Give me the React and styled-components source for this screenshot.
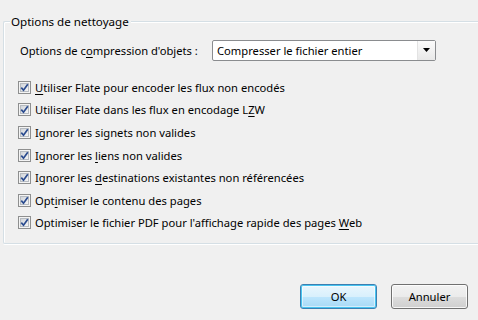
import React from "react";
import styled, { createGlobalStyle } from "styled-components";

const Global = createGlobalStyle`
  html, body { margin: 0; padding: 0; background: #f0f0f0; }
  body { width: 478px; height: 320px; overflow: hidden;
    font-family: "Segoe UI", "Noto Sans", "Open Sans", sans-serif; font-size: 11.2px; color: #000; }
`;

const Page = styled.div`
  width: 478px;
  height: 320px;
  display: flex;
  flex-direction: column;
  padding: 13px 0 0 3px;
  box-sizing: border-box;
`;

const Group = styled.fieldset`
  margin: 0;
  padding: 0 0 12px 14px;
  border: 1px solid #d5dfe5;
  border-right: none;
  border-radius: 2px 0 0 2px;
  box-shadow: inset 1px 1px 0 #fff, 0 1px 0 #fff;
  min-width: 0;
  height: 231px;
  box-sizing: border-box;
  display: flex;
  flex-direction: column;
`;

const Legend = styled.legend`
  margin-left: -8px;
  padding: 0 2px 0 1px;
  background: #f0f0f0;
  line-height: 17px;
  font-size: 11.6px;
`;

const ComboRow = styled.div`
  display: flex;
  align-items: center;
  gap: 14px;
  margin-top: 10px;
  height: 20px;
  margin-bottom: 16px;
  padding-left: 2px;
`;

const ComboLabel = styled.span`
  width: 178px;
  white-space: nowrap;
`;

const Combo = styled.div`
  width: 224px;
  height: 21px;
  box-sizing: border-box;
  border: 1px solid #8a8c8f;
  border-radius: 2px;
  background: #fff;
  display: flex;
  align-items: stretch;
`;

const ComboText = styled.div`
  flex: 1;
  padding-left: 4px;
  line-height: 19px;
  white-space: nowrap;
`;

const ComboButton = styled.div`
  width: 17px;
  display: flex;
  align-items: center;
  justify-content: center;
  background: linear-gradient(#fbfbfb, #e8e8e8);
  border-left: 1px solid #e3e3e3;
`;

const Row = styled.label`
  display: flex;
  align-items: center;
  gap: 4px;
  height: 22.6px;
  white-space: nowrap;
`;

const U = styled.span`
  text-decoration: underline;
  text-underline-offset: 2px;
`;

const Footer = styled.div`
  display: flex;
  justify-content: flex-end;
  gap: 14px;
  padding: 40px 10px 0 0;
`;

const Button = styled.button`
  width: 77px;
  height: 25px;
  box-sizing: border-box;
  font: inherit;
  color: #000;
  border-radius: 3px;
  padding: 0;
  border: 1px solid ${(p) => (p.$primary ? "#3c7fb1" : "#707070")};
  background: ${(p) =>
    p.$primary
      ? "linear-gradient(#eaf6fd 0%, #d9f0fc 50%, #bee6fd 51%, #a7d9f5 100%)"
      : "linear-gradient(#f2f2f2 0%, #ebebeb 50%, #dddddd 51%, #cfcfcf 100%)"};
  box-shadow: ${(p) =>
    p.$primary ? "inset 0 0 0 1px #48c4f0, inset 0 0 0 2px rgba(255,255,255,.5)" : "inset 0 0 0 1px rgba(255,255,255,.8)"};
`;

const Check = () => (
  <svg width="13" height="13" viewBox="0 0 13 13">
    <defs>
      <linearGradient id="cbg" x1="0" y1="0" x2="1" y2="1">
        <stop offset="0" stopColor="#cfd3d8" />
        <stop offset="1" stopColor="#f7f7f7" />
      </linearGradient>
    </defs>
    <rect x="0.5" y="0.5" width="12" height="12" fill="#f4f4f4" stroke="#8e8f8f" />
    <rect x="2.5" y="2.5" width="8" height="8" fill="url(#cbg)" stroke="#b6bbc1" />
    <path d="M3.3 6.6 L5.5 9.2 L9.8 3.2" fill="none" stroke="#2a4b8f" strokeWidth="1.7" />
  </svg>
);

const items = [
  [<U key="u">U</U>, "tiliser Flate pour encoder les flux non encodés"],
  ["Utiliser Flate dans les flux en encodage L", <U key="u">Z</U>, "W"],
  ["Ignorer les signets non valides"],
  ["Ignorer les ", <U key="u">l</U>, "iens non valides"],
  ["Ignorer les ", <U key="u">d</U>, "estinations existantes non référencées"],
  ["Opt", <U key="u">i</U>, "miser le contenu des pages"],
  ["Optimiser le fichier PDF pour l'affichage rapide des pages ", <U key="u">W</U>, "eb"],
];

export default function App() {
  return (
    <>
      <Global />
      <Page>
        <Group>
          <Legend>Options de nettoyage</Legend>
          <ComboRow>
            <ComboLabel>
              Options de c<U>o</U>mpression d'objets :
            </ComboLabel>
            <Combo>
              <ComboText>Compresser le fichier entier</ComboText>
              <ComboButton>
                <svg width="7" height="4" viewBox="0 0 7 4">
                  <path d="M0 0 H7 L3.5 4 Z" fill="#000" />
                </svg>
              </ComboButton>
            </Combo>
          </ComboRow>
          {items.map((parts, i) => (
            <Row key={i}>
              <Check />
              <span>{parts}</span>
            </Row>
          ))}
        </Group>
        <Footer>
          <Button $primary>OK</Button>
          <Button>Annuler</Button>
        </Footer>
      </Page>
    </>
  );
}
